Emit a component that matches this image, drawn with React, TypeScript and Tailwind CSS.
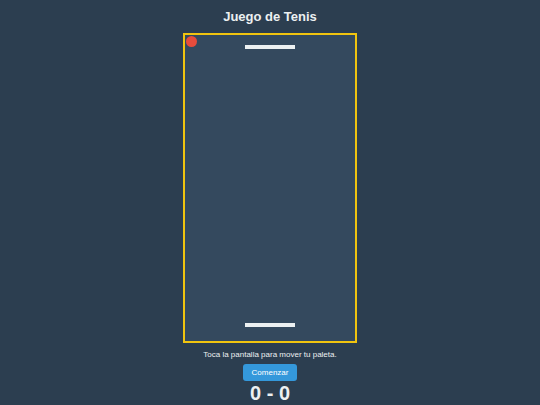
import { useState } from "react";

export default function App() {
  const [score] = useState({ player: 0, cpu: 0 });

  return (
    <div className="min-h-screen w-full bg-[#2c3e50] flex flex-col items-center text-[#ecf0f1] font-['Liberation_Sans',Arial,sans-serif]">
      <h1 className="mt-[9px] text-[13px] leading-[15px] font-bold">Juego de Tenis</h1>

      <div className="mt-[9px] w-[174px] h-[310px] border-2 border-[#f1c40f] bg-[#34495e] flex flex-col items-center justify-between pt-[10px] pb-[14px] relative">
        <div className="absolute left-[1px] top-[1px] w-[11px] h-[11px] rounded-full bg-[#e74c3c]" />
        <div className="w-[50px] h-[4px] bg-[#ecf0f1]" />
        <div className="w-[50px] h-[4px] bg-[#ecf0f1]" />
      </div>

      <p className="mt-[7px] text-[8px] leading-[10px]">Toca la pantalla para mover tu paleta.</p>

      <button className="mt-[4px] px-[9px] py-[4px] text-[8px] leading-[9px] bg-[#3498db] text-white rounded-[3px]">
        Comenzar
      </button>

      <div className="mt-[1px] text-[20px] leading-[23px] font-bold">
        {score.player} - {score.cpu}
      </div>
    </div>
  );
}
